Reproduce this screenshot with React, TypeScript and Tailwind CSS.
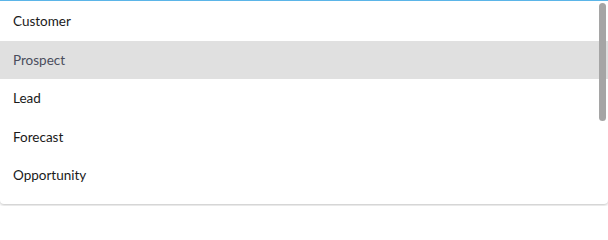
import React from "react";

const items = [
  "Customer",
  "Prospect",
  "Lead",
  "Forecast",
  "Opportunity",
  "Contract",
  "Partner",
  "Vendor",
  "Other",
];

export default function App() {
  return (
    <div className="w-[608px] h-[206px] bg-white overflow-hidden" style={{ fontFamily: "Lato, 'Noto Sans', sans-serif" }}>
      <div className="relative w-[608px] h-[204px] bg-white border-t border-[#5bb5e8] rounded-b-[4px] shadow-[0_1px_3px_rgba(0,0,0,0.25)] overflow-hidden">
        <div className="flex flex-col pt-px">
          {items.map((it, i) => (
            <div
              key={it}
              className={
                "h-[38.5px] shrink-0 flex items-center pl-[13px] text-[13.5px] " +
                (i === 1 ? "bg-[#e0e0e0] text-[#4a4d5c]" : "text-[#1a1a1a]")
              }
            >
              {it}
            </div>
          ))}
        </div>
        <div className="absolute right-[2px] top-[2px] w-[7px] h-[118px] rounded-full bg-[#a5a5a5]" />
      </div>
    </div>
  );
}
